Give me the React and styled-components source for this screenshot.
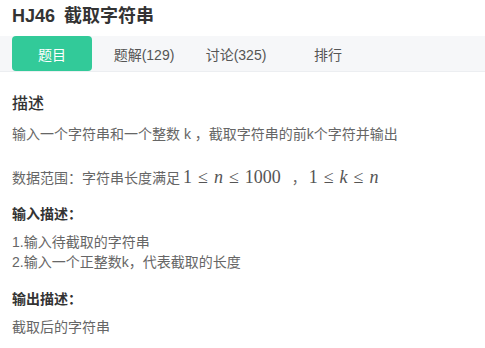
import React from "react";
import styled, { createGlobalStyle } from "styled-components";

const GlobalStyle = createGlobalStyle`
  body {
    margin: 0;
    background: #fff;
    font-family: "Liberation Sans", "Noto Sans CJK SC", sans-serif;
  }
`;

const Page = styled.div`
  width: 485px;
  height: 348px;
  overflow: hidden;
`;

const Title = styled.h1`
  margin: 0;
  padding: 3px 12px 0;
  height: 33px;
  font-size: 18px;
  font-weight: 700;
  color: #333;
  line-height: 26px;
  word-spacing: 4px;
`;

const TabBar = styled.div`
  display: flex;
  gap: 12px;
  padding: 0 12px;
  height: 35px;
  background: #f6f7f9;
  border-bottom: 1px solid #eceef1;
`;

const Tab = styled.div`
  width: 80px;
  display: flex;
  align-items: center;
  justify-content: center;
  font-size: 14px;
  border-radius: 4px;
  color: ${({ active }) => (active ? "#fff" : "#555")};
  background: ${({ active }) => (active ? "#32ca99" : "transparent")};
`;

const Content = styled.div`
  padding: 0 12px;
  color: #666;
  font-size: 14px;
`;

const Heading = styled.h2`
  margin: 21px 0 0;
  font-size: 16px;
  font-weight: 500;
  color: #333;
  line-height: 22px;
`;

const Para = styled.p`
  margin: ${({ top }) => top}px 0 0;
  line-height: 20px;
`;

const SubHeading = styled.h3`
  margin: ${({ top }) => top}px 0 0;
  font-size: 14px;
  font-weight: 700;
  color: #333;
  line-height: 20px;
`;

const Math = styled.span`
  font-family: "Liberation Serif", "DejaVu Serif", serif;
  font-size: 18px;
  color: #555;
  margin: 0 7px 0 3px;
`;

const Var = styled.i`
  font-style: italic;
`;

const Le = styled.span`
  margin: 0 6px;
`;

const App = () => (
  <>
    <GlobalStyle />
    <Page>
      <Title>HJ46 截取字符串</Title>
      <TabBar>
        <Tab active>题目</Tab>
        <Tab>题解(129)</Tab>
        <Tab>讨论(325)</Tab>
        <Tab>排行</Tab>
      </TabBar>
      <Content>
        <Heading>描述</Heading>
        <Para top={9}>输入一个字符串和一个整数 k ，截取字符串的前k个字符并输出</Para>
        <Para top={23}>
          数据范围：字符串长度满足
          <Math>
            1<Le>≤</Le><Var>n</Var><Le>≤</Le>1000
          </Math>{" "}
          ，
          <Math>
            1<Le>≤</Le><Var>k</Var><Le>≤</Le><Var>n</Var>
          </Math>
        </Para>
        <SubHeading top={16}>输入描述：</SubHeading>
        <Para top={8}>
          1.输入待截取的字符串
          <br />
          2.输入一个正整数k，代表截取的长度
        </Para>
        <SubHeading top={17}>输出描述：</SubHeading>
        <Para top={8}>截取后的字符串</Para>
      </Content>
    </Page>
  </>
);

export default App;
